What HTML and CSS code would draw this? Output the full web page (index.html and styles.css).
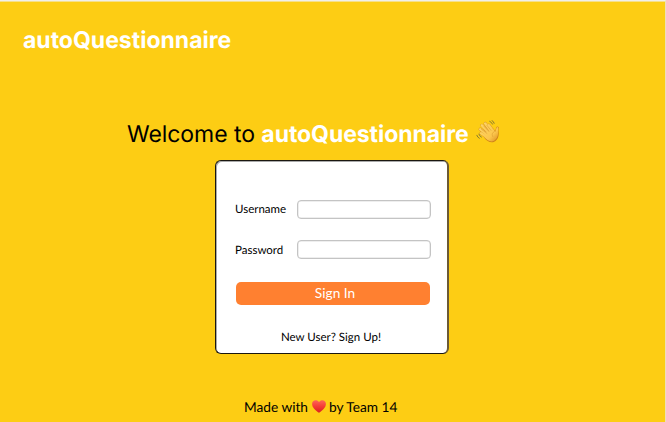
FILE: index.html
```html
<!DOCTYPE html>
<html lang="en">
<head>
<meta charset="utf-8">
<title>autoQuestionnaire</title>
<link rel="stylesheet" href="styles.css">
</head>
<body>
<div class="page">
  <header class="brand">autoQuestionnaire</header>
  <h1 class="welcome">
    <span class="greeting">Welcome to <b>autoQuestionnaire</b></span>
    <svg class="wave" viewBox="0 0 24 24" aria-hidden="true">
      <defs>
        <linearGradient id="skin" x1="0" y1="0" x2="24" y2="24" gradientUnits="userSpaceOnUse">
          <stop offset="0" stop-color="#ffdc70"/><stop offset=".65" stop-color="#fcc64c"/><stop offset="1" stop-color="#d07a14"/>
        </linearGradient>
      </defs>
      <g fill="none" stroke-linecap="round">
        <g stroke="#d58d25" stroke-width="3.1"><path d="M12.5 15.5 4.2 9.2M14 14 5.9 5.3M15.5 12 9.2 3.5M17.3 11.5 12.8 5.2M12 18 5 13.2"/></g>
        <path fill="#cf8119" d="M8 13 17 8.5 19.3 11 20.2 7.3Q21.3 5.8 22.8 7.3 22.2 9 22.7 13.5 22.7 18.5 19.5 21C16 24 11 21.5 8.5 18Z"/>
        <g stroke="url(#skin)" stroke-width="2.5"><path d="M12.5 15.5 4.2 9.2M14 14 5.9 5.3M15.5 12 9.2 3.5M17.3 11.5 12.8 5.2M12 18 5 13.2"/></g>
        <path fill="url(#skin)" d="M8.5 13 17 9 19.4 11.7 20.5 7.7Q21.4 6.4 22.3 7.7 21.7 10 22 13.5 22 17.7 18.8 20.2C15.5 22.7 11.5 21 8.7 17.5Z"/>
        <path stroke="#d99a33" stroke-width=".6" d="m5.4 9.2 5.5 4.2M8 6.4l5 5.2M10.9 5.3l4 5M18.5 11.5c-2.2 1-3 3-1.8 5"/>
        <path stroke="#7d7332" stroke-width=".9" d="M13.7 1.3q2 .7 2.8 2.8M16 .6q1.8.8 2.2 2.7M.8 15.3q.6 2 2.5 3M2.9 14.2q.6 2 2.5 2.9"/>
      </g>
    </svg>
  </h1>
  <form class="card">
    <div class="field"><label for="username">Username</label><input id="username" type="text"></div>
    <div class="field"><label class="lower" for="password">Password</label><input id="password" type="password"></div>
    <button class="signin" type="button">Sign In</button>
    <div class="signup">New User? Sign Up!</div>
  </form>
  <footer class="credit">
    <span>Made with</span>
    <svg class="heart" viewBox="0 0 14 13" aria-hidden="true">
      <defs><linearGradient id="red" x1="0" y1="0" x2="0" y2="1"><stop offset="0" stop-color="#ff6557"/><stop offset=".5" stop-color="#f43b35"/><stop offset="1" stop-color="#d91f20"/></linearGradient></defs>
      <path fill="url(#red)" d="M7 12.8C3.8 10.6.1 7.6.1 3.9.1.2 5-1.1 7 2.3 9-1.1 13.9.2 13.9 3.9 13.9 7.6 10.2 10.6 7 12.8Z"/>
    </svg>
    <span>by Team 14</span>
  </footer>
</div>
</body>
</html>
```
FILE: styles.css
```css
* { box-sizing: border-box; }
body {
  margin: 0;
  font-family: Lato, sans-serif;
  color: #000;
  text-rendering: geometricPrecision;
}
.page {
  height: 422px;
  overflow: hidden;
  background: #fdcd14;
  border-top: 1px solid #f1efe9;
  border-right: 1px solid #ece0b5;
  box-shadow: inset 0 1px 0 #f6e08a;
}
.brand {
  margin: 25px 0 0 23px;
  font: 700 23px/28px Inter, sans-serif;
  color: #fff;
}
.welcome {
  display: flex;
  align-items: flex-start;
  gap: 7px;
  margin: 66px 0 0 127px;
  font: 400 23px/28px Inter, sans-serif;
  white-space: nowrap;
}
.greeting { letter-spacing: -0.06px; }
.welcome b { font-weight: 700; color: #fff; }
.wave { width: 24px; height: 24px; }
.card {
  display: flex;
  flex-direction: column;
  width: 234px;
  height: 194px;
  margin: 12px 0 0 215px;
  padding: 39px 16px 0 19px;
  border: 1px solid #1a1710;
  border-right: 2px solid #6b5a35;
  border-radius: 6px;
  box-shadow: inset 1px 1px 0 #aaa;
  background: #fff;
}
.field {
  display: flex;
  align-items: center;
  justify-content: space-between;
  height: 19px;
  margin-bottom: 21px;
  font-size: 11.5px;
}
.lower { padding-top: 2px; }
.field input {
  width: 134px;
  height: 19px;
  padding: 0 4px;
  border: 1px solid #c4c4c4;
  border-radius: 4px;
  background: #fff;
  box-shadow: inset 0 0 0 .5px #ddd;
}
.signin {
  width: 194px;
  height: 23px;
  margin: 2px 0 0 1px;
  padding: 0 0 2px 4px;
  border: 0;
  border-radius: 5px;
  background: #ff8030;
  color: #fff;
  font: 400 13.7px/21px Lato, sans-serif;
}
.signup {
  margin: 25px 4px 0 0;
  text-align: center;
  font-size: 11.5px;
  line-height: 16px;
}
.credit {
  display: flex;
  align-items: center;
  gap: 3.5px;
  margin: 44px 0 0 244px;
  font-size: 13.7px;
  line-height: 18px;
  white-space: nowrap;
}
.heart { width: 14px; height: 13px; position: relative; top: -1px; }
```
